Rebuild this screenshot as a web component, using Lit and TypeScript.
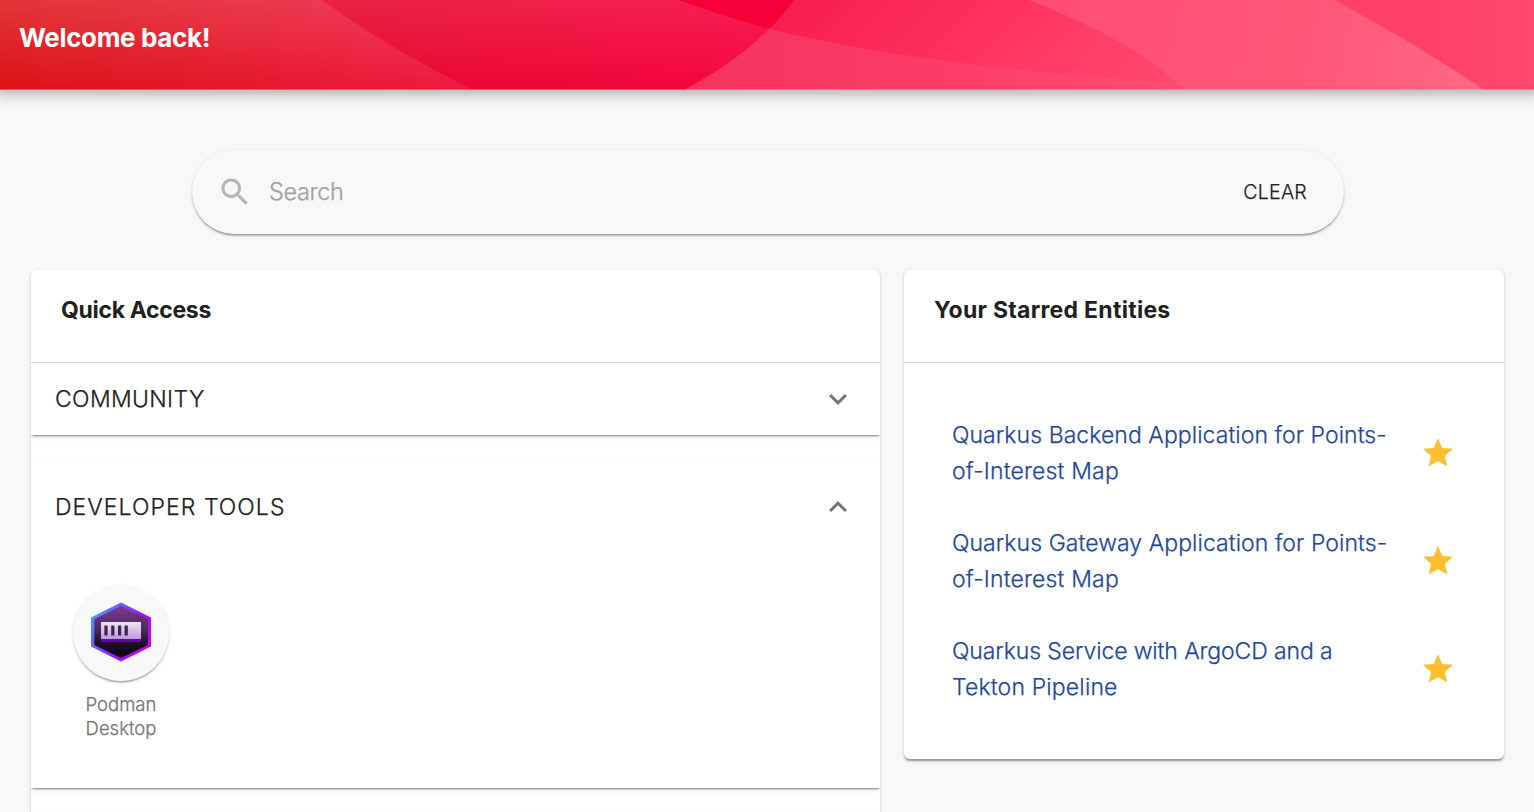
import { LitElement, html, svg, css } from "lit";
import { customElement, property } from "lit/decorators.js";

const CHEVRON_DOWN = svg`<path d="M16.59 8.59 12 13.17 7.41 8.59 6 10l6 6 6-6z"/>`;
const CHEVRON_UP = svg`<path d="m12 8-6 6 1.41 1.41L12 10.83l4.59 4.58L18 14z"/>`;
const STAR = svg`<path d="M12 17.27 18.18 21l-1.64-7.03L22 9.24l-7.19-.61L12 2 9.19 8.63 2 9.24l5.46 4.73L5.82 21z"/>`;
const SEARCH = svg`<path d="M15.5 14h-.79l-.28-.27C15.41 12.59 16 11.11 16 9.5 16 5.91 13.09 3 9.5 3S3 5.91 3 9.5 5.91 16 9.5 16c1.61 0 3.09-.59 4.23-1.57l.27.28v.79l5 4.99L20.49 19l-4.99-5zm-6 0C7.01 14 5 11.99 5 9.5S7.01 5 9.5 5 14 7.01 14 9.5 11.99 14 9.5 14z"/>`;

const icon = (glyph: unknown) =>
  html`<svg class="icon" viewBox="0 0 24 24" aria-hidden="true">${glyph}</svg>`;

const ICON_CSS = css`
  .icon { display: block; flex: none; width: 36px; height: 36px; fill: currentColor; }
`;

@customElement("page-banner")
class PageBanner extends LitElement {
  static styles = css`
    :host {
      display: grid;
      height: 90px;
      position: relative;
      z-index: 1;
      box-shadow: 0 0 12px 4.5px rgba(20, 20, 20, 0.3);
    }
    .art, h1 { grid-area: 1 / 1; }
    .art { display: block; width: 100%; height: 90px; }
    h1 {
      z-index: 1;
      margin: 0;
      padding: 18px 0 0 19px;
      font-size: 26px;
      line-height: 40px;
      font-weight: 700;
      -webkit-text-stroke: 0;
      letter-spacing: -0.36px;
      color: #fff;
    }
  `;
  render() {
    return html`
      <svg class="art" viewBox="0 0 1534 90" preserveAspectRatio="none" aria-hidden="true">
        <defs>
          <linearGradient id="a" gradientUnits="userSpaceOnUse" x1="0" y1="0" x2="473" y2="0">
            <stop offset="0" stop-color="#dc1216"/><stop offset="1" stop-color="#ee1b40"/>
          </linearGradient>
          <linearGradient id="b" gradientUnits="userSpaceOnUse" x1="322" y1="0" x2="760" y2="0">
            <stop offset="0" stop-color="#e5082a"/><stop offset="1" stop-color="#f6043e"/>
          </linearGradient>
          <linearGradient id="w" x1="0" y1="0" x2="0" y2="1">
            <stop offset="0" stop-color="#fff" stop-opacity=".15"/><stop offset="1" stop-color="#fff" stop-opacity="0"/>
          </linearGradient>
          <linearGradient id="v" x1="0" y1="0" x2="0" y2="1">
            <stop offset="0" stop-color="#fff" stop-opacity=".11"/><stop offset="1" stop-color="#fff" stop-opacity="0"/>
          </linearGradient>
          <linearGradient id="d" gradientUnits="userSpaceOnUse" x1="770" y1="0" x2="1020" y2="250">
            <stop offset="0" stop-color="#f61d4b"/><stop offset=".5" stop-color="#ff315d"/>
            <stop offset=".67" stop-color="#ff3c65"/><stop offset="1" stop-color="#ff486f"/>
          </linearGradient>
          <linearGradient id="l" gradientUnits="userSpaceOnUse" x1="690" y1="60" x2="1180" y2="89">
            <stop offset="0" stop-color="#f4345f"/><stop offset=".5" stop-color="#fb3c66"/><stop offset="1" stop-color="#ff4d73"/>
          </linearGradient>
          <linearGradient id="e" gradientUnits="userSpaceOnUse" x1="1040" y1="0" x2="1470" y2="89">
            <stop offset="0" stop-color="#ff4f74"/><stop offset=".6" stop-color="#ff5678"/><stop offset="1" stop-color="#ff6784"/>
          </linearGradient>
          <linearGradient id="f" gradientUnits="userSpaceOnUse" x1="1380" y1="0" x2="1534" y2="0">
            <stop offset="0" stop-color="#ff4167"/><stop offset=".4" stop-color="#ff4167"/><stop offset="1" stop-color="#ff4a6c"/>
          </linearGradient>
        </defs>
        <rect width="1534" height="90" fill="url(#b)"/>
        <path d="M0 0H800V90H0z" fill="url(#v)"/>
        <path d="M0 0H322Q385 46 473 90H0z" fill="url(#a)"/>
        <path d="M0 0H322Q385 46 473 90H0z" fill="url(#w)"/>
        <path d="M679 0H800L769 29Q722 16 679 0z" fill="#f60038"/>
        <path d="M794 0Q759 50 684 90H1534V0z" fill="url(#d)"/>
        <path d="M769 29Q738 61 684 90H1400Q1003 85 769 29z" fill="url(#l)"/>
        <path d="M1029 0Q1136 41 1184 90H1485Q1410 40 1334 0z" fill="url(#e)"/>
        <path d="M1334 0Q1410 40 1485 90H1534V0z" fill="url(#f)"/>
        <rect y="89" width="1534" height="1" fill="#c0c0c0" opacity=".4"/>
      </svg>
      <h1>Welcome back!</h1>
    `;
  }
}

@customElement("search-bar")
class SearchBar extends LitElement {
  static styles = [ICON_CSS, css`
    :host {
      display: flex;
      align-items: center;
      height: 84px;
      box-sizing: border-box;
      padding: 0 37px 0 25px;
      border-radius: 42px;
      background: #f8f8f8;
      box-shadow: 0 3px 1.5px -1.5px rgba(0, 0, 0, 0.2), 0 1.5px 1.5px rgba(0, 0, 0, 0.14), 0 1.5px 4.5px rgba(0, 0, 0, 0.12);
    }
    .icon { color: #b5b5b5; }
    .hint { flex: 1; padding: 0 0 2px 16px; font-size: 23.5px; letter-spacing: -0.35px; color: #a1a1a1; }
    .clear { padding-bottom: 1px; font-size: 19.5px; letter-spacing: 0.3px; color: #212121; }
  `];
  render() {
    return html`${icon(SEARCH)}<span class="hint">Search</span><span class="clear">CLEAR</span>`;
  }
}

@customElement("info-card")
class InfoCard extends LitElement {
  @property() heading = "";
  static styles = css`
    :host {
      display: block;
      border-radius: 6px;
      background: #fff;
      box-shadow: 0 3px 1.5px -1.5px rgba(0, 0, 0, 0.2), 0 1.5px 1.5px rgba(0, 0, 0, 0.14), 0 1.5px 4.5px rgba(0, 0, 0, 0.12);
    }
    h2 {
      margin: 0;
      height: 93px;
      box-sizing: border-box;
      padding: 22px 30px 0;
      border-bottom: 1px solid #dcdcdc;
      font-size: 23px;
      line-height: 36px;
      font-weight: 700;
      -webkit-text-stroke: 0;
      letter-spacing: var(--heading-spacing, 0);
      color: #212121;
    }
  `;
  render() {
    return html`<h2>${this.heading}</h2><slot></slot>`;
  }
}

@customElement("tool-section")
class ToolSection extends LitElement {
  @property() label = "";
  @property({ type: Boolean, reflect: true }) open = false;
  static styles = [ICON_CSS, css`
    :host {
      display: block;
      background: #fff;
      box-shadow: 0 3px 1.5px -1.5px rgba(0, 0, 0, 0.2), 0 1.5px 1.5px rgba(0, 0, 0, 0.14), 0 1.5px 4.5px rgba(0, 0, 0, 0.12);
      clip-path: inset(-3px 0 -6px 0);
    }
    .bar {
      display: flex;
      align-items: center;
      justify-content: space-between;
      height: 72px;
      padding: 0 24px;
      font-size: 23px;
      color: #212121;
    }
    :host([open]) .bar { height: 96px; }
    .icon { color: #757575; }
    .body { height: 233px; box-sizing: border-box; padding: 30px 0 0 42px; }
  `];
  render() {
    return html`
      <div class="bar"><span>${this.label}</span>${icon(this.open ? CHEVRON_UP : CHEVRON_DOWN)}</div>
      ${this.open ? html`<div class="body"><slot></slot></div>` : ""}
    `;
  }
}

@customElement("tool-tile")
class ToolTile extends LitElement {
  static styles = css`
    :host { display: flex; flex-direction: column; align-items: center; width: 96px; }
    .disc {
      display: grid;
      place-items: center;
      width: 96px;
      height: 96px;
      border-radius: 50%;
      background: #f8f8f8;
      box-shadow: 0 3px 1.5px -1.5px rgba(0, 0, 0, 0.2), 0 1.5px 1.5px rgba(0, 0, 0, 0.1), 0 1.5px 4.5px rgba(0, 0, 0, 0.1);
    }
    .logo { display: block; width: 60px; height: 60px; margin-bottom: 2px; }
    .name { margin-top: 11px; font-size: 18.5px; line-height: 24px; text-align: center; color: #757575; }
  `;
  render() {
    return html`
      <div class="disc">
        <svg class="logo" viewBox="0 0 60 60" aria-hidden="true">
          <defs>
            <linearGradient id="rim" x1="0" y1=".2" x2="1" y2=".8">
              <stop offset="0" stop-color="#3f9bff"/><stop offset=".35" stop-color="#7350ff"/>
              <stop offset=".65" stop-color="#9d12fa"/><stop offset="1" stop-color="#d600d8"/>
            </linearGradient>
            <linearGradient id="core" x1="0" y1="0" x2="0" y2="1">
              <stop offset="0" stop-color="#7c3b90"/><stop offset=".45" stop-color="#4c2a5c"/>
              <stop offset=".7" stop-color="#20102c"/><stop offset="1" stop-color="#080210"/>
            </linearGradient>
            <linearGradient id="box" x1="0" y1="0" x2="0" y2="1">
              <stop offset="0" stop-color="#efe6f3"/><stop offset="1" stop-color="#bb99e0"/>
            </linearGradient>
          </defs>
          <path d="M30 .5 60 15.5V44.5L30 59.5 0 44.5V15.5z" fill="url(#rim)"/>
          <path d="M30 4 57 17.2V43L30 56 3.3 43V17.2z" fill="url(#core)"/>
          <rect x="10" y="20" width="40" height="17" fill="url(#box)"/>
          <rect x="10" y="37" width="40" height="3" fill="#6a00b4"/>
          <path d="M13.4 23.5h3.2v10h-3.2zm6.8 0h3.2v10h-3.2zm6.8 0h3.2v10h-3.2zm6.6 0h3.2v10h-3.2z" fill="#3b2549"/>
        </svg>
      </div>
      <span class="name"><slot></slot></span>
    `;
  }
}

const STARRED = [
  { lines: ["Quarkus Backend Application for Points-", "of-Interest Map"], tight: false },
  { lines: ["Quarkus Gateway Application for Points-", "of-Interest Map"], tight: false },
  { lines: ["Quarkus Service with ArgoCD and a", "Tekton Pipeline"], tight: true },
];

@customElement("app-root")
class AppRoot extends LitElement {
  static styles = [ICON_CSS, css`
    :host {
      display: block;
      height: 812px;
      overflow: hidden;
      background: #f8f8f8;
      font-family: Inter, "Open Sans", sans-serif;
      font-weight: 300;
      -webkit-text-stroke: 0.25px;
    }
    search-bar { margin: 60px 190px 0 192px; }
    .columns {
      display: grid;
      grid-template-columns: 849px 600px;
      gap: 24px;
      align-items: start;
      padding: 36px 30px 0 31px;
    }
    .quick { --heading-spacing: -0.33px; height: 600px; }
    .starred-card { --heading-spacing: 0.28px; }
    .sections { display: grid; gap: 24px; }
    .community { letter-spacing: 0.35px; }
    .devtools { letter-spacing: 1.05px; }
    .devtools tool-tile { letter-spacing: 0; }
    ul { list-style: none; margin: 0; padding: 36px 48px; }
    li { display: flex; align-items: center; justify-content: space-between; height: 108px; }
    a { font-size: 23px; line-height: 36px; color: #1f4796; white-space: nowrap; letter-spacing: 0.06px; }
    .tight { letter-spacing: -0.11px; }
    .line { display: block; }
    .line + .line { letter-spacing: 0.16px; }
    .icon { color: #fdbf2d; }
  `];
  render() {
    return html`
      <page-banner></page-banner>
      <search-bar></search-bar>
      <div class="columns">
        <info-card class="quick" heading="Quick Access">
          <div class="sections">
            <tool-section class="community" label="COMMUNITY"></tool-section>
            <tool-section class="devtools" label="DEVELOPER TOOLS" open>
              <tool-tile>Podman Desktop</tool-tile>
            </tool-section>
            <tool-section></tool-section>
          </div>
        </info-card>
        <info-card class="starred-card" heading="Your Starred Entities">
          <ul>
            ${STARRED.map((e) => html`<li><a class=${e.tight ? "tight" : ""}>${e.lines.map((l) => html`<span class="line">${l}</span>`)}</a>${icon(STAR)}</li>`)}
          </ul>
        </info-card>
      </div>
    `;
  }
}
